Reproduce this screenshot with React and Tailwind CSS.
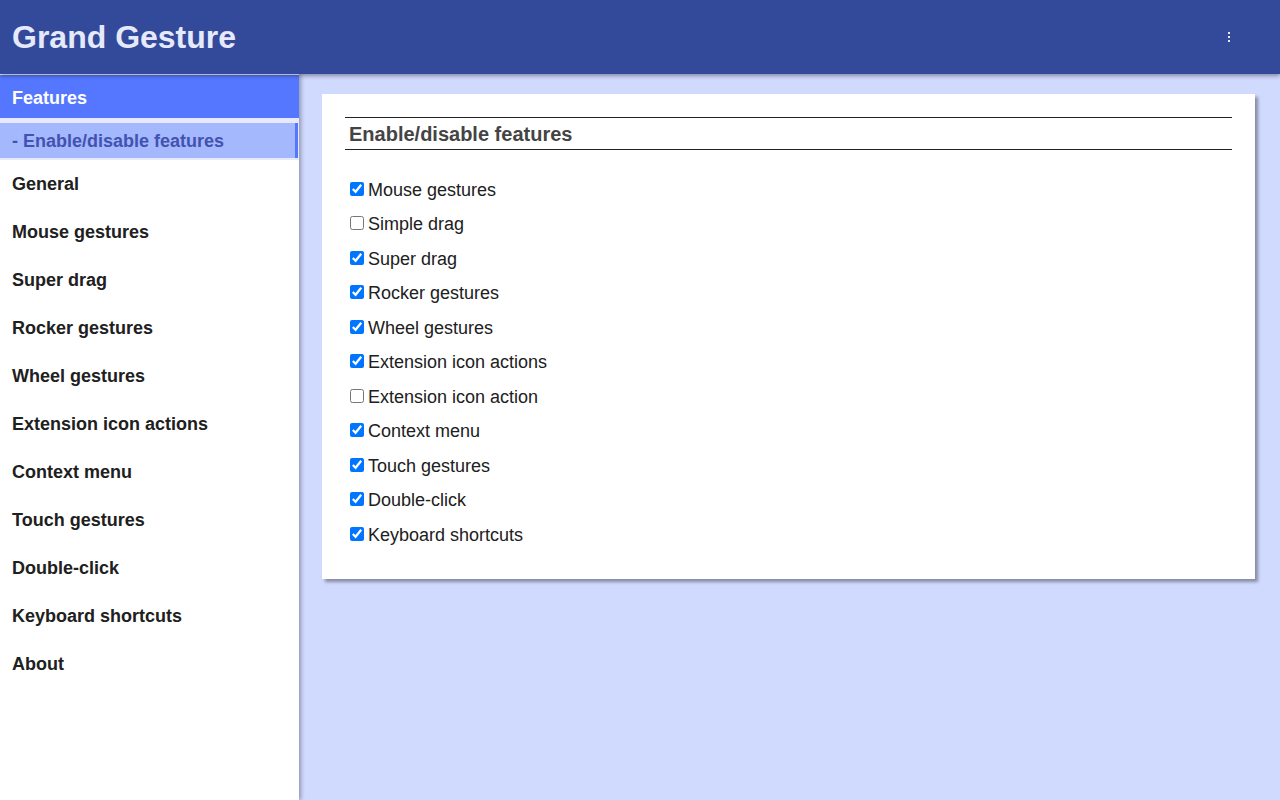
import { useState } from 'react';

const navItems = [
    "General",
    "Mouse gestures",
    "Super drag",
    "Rocker gestures",
    "Wheel gestures",
    "Extension icon actions",
    "Context menu",
    "Touch gestures",
    "Double-click",
    "Keyboard shortcuts",
    "About",
];

const features = [
    { label: "Mouse gestures", on: true },
    { label: "Simple drag", on: false },
    { label: "Super drag", on: true },
    { label: "Rocker gestures", on: true },
    { label: "Wheel gestures", on: true },
    { label: "Extension icon actions", on: true },
    { label: "Extension icon action", on: false },
    { label: "Context menu", on: true },
    { label: "Touch gestures", on: true },
    { label: "Double-click", on: true },
    { label: "Keyboard shortcuts", on: true },
];

export default function App() {
    const [checks, setChecks] = useState(features.map((f) => f.on));

    return (
        <div className="h-[800px] flex flex-col bg-[#d0d9fe] font-['Liberation_Sans',Arial,sans-serif] overflow-hidden">
            {/* Header */}
            <header className="h-[74px] shrink-0 bg-[#334a9b] flex items-center justify-between pl-3 pr-[46px] shadow-[0_2px_4px_rgba(0,0,0,0.35)] relative z-20">
                <h1 className="text-[32px] font-bold text-[#e6e9fa]">Grand Gesture</h1>
                <button className="flex flex-col gap-[2px] items-center px-1 py-1">
                    <span className="w-[2px] h-[2px] bg-[#e6e9fa]"></span>
                    <span className="w-[2px] h-[2px] bg-[#e6e9fa]"></span>
                    <span className="w-[2px] h-[2px] bg-[#e6e9fa]"></span>
                </button>
            </header>

            <div className="flex flex-1 min-h-0">
                {/* Sidebar */}
                <nav className="w-[299px] shrink-0 bg-white shadow-[2px_0_4px_rgba(0,0,0,0.3)] relative z-10 pt-px">
                    <div className="h-[43px] bg-[#5577ff] text-white font-bold text-[18px] flex items-center pl-3 pt-[4px]">Features</div>
                    <div className="bg-[#e5e9fb] pt-[5px] pb-[2px]">
                        <div className="h-[35px] bg-[#a3b8fd] border-r-[3px] border-[#5577ff] text-[#4352b0] font-bold text-[18px] flex items-center pl-3 pt-[2px] mr-px">
                            - Enable/disable features
                        </div>
                    </div>
                    {navItems.map((item) => (
                        <div key={item} className="h-12 flex items-center pl-3 text-[18px] font-bold text-[#202020]">
                            {item}
                        </div>
                    ))}
                </nav>

                {/* Content */}
                <main className="flex-1 pl-[23px] pr-[25px] pt-[20px]">
                    <div className="bg-white px-[23px] pt-[23px] pb-[26px] shadow-[3px_3px_3px_rgba(0,0,0,0.35)]">
                        <h2 className="border-t border-b border-[#222] h-[33px] flex items-center pl-1 text-[20px] font-bold text-[#444]">
                            Enable/disable features
                        </h2>
                        <div className="mt-[23px] flex flex-col">
                            {features.map((f, i) => (
                                <label key={f.label} className="h-[34.5px] flex items-center text-[18px] text-[#202020]">
                                    <input
                                        type="checkbox"
                                        checked={checks[i]}
                                        onChange={() => setChecks(checks.map((c, j) => (j === i ? !c : c)))}
                                        className="w-[14px] h-[14px] ml-[5px] mr-[4px] mb-[3px] accent-[#0075ff]"
                                    />
                                    {f.label}
                                </label>
                            ))}
                        </div>
                    </div>
                </main>
            </div>
        </div>
    );
}
